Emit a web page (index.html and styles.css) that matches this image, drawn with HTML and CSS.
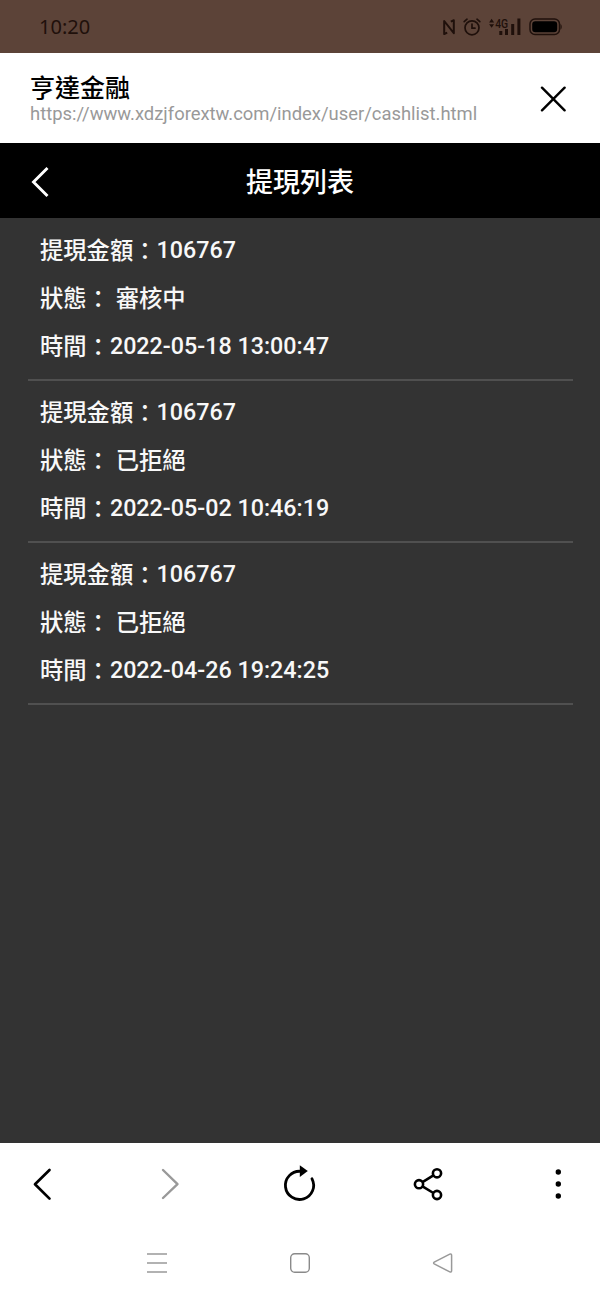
FILE: index.html
```html
<!DOCTYPE html>
<html lang="zh-Hant">
<head>
  <meta charset="UTF-8">
  <title>提現列表</title>
  <link rel="stylesheet" href="styles.css">
</head>
<body>
  <div class="status-bar">
    <span class="clock">10:20</span>
    <div class="status-icons">
      <svg width="12" height="18" viewBox="0 0 12 18" fill="none" stroke="currentColor" stroke-width="2" stroke-linejoin="round">
        <path d="M4.2 14.6 1.2 16V3L10.8 15.2V2.2L7.8 3.6"/>
      </svg>
      <svg width="18" height="18" viewBox="0 0 18 18" fill="none" stroke="currentColor" stroke-width="1.7" stroke-linecap="round">
        <circle cx="9" cy="9.8" r="7"/>
        <path d="M9 6v4.2h3M1.2 3.6 4 1.2M16.8 3.6 14 1.2"/>
      </svg>
      <svg class="signal" width="32" height="18" viewBox="0 0 32 18" fill="currentColor">
        <path d="M0.1 4.4 2.6 0.8 5.1 4.4ZM0.1 6.2 2.6 9.8 5.1 6.2Z"/>
        <text class="network" x="6.2" y="9.8" textLength="13" lengthAdjust="spacingAndGlyphs">4G</text>
        <rect x="10.3" y="13" width="3" height="4"/>
        <rect x="16" y="11" width="3" height="6"/>
        <rect x="22.2" y="6" width="3" height="11"/>
        <rect x="28.4" y="0.5" width="3" height="16.5"/>
      </svg>
      <svg width="34" height="18" viewBox="0 0 34 18">
        <rect x="1" y="1" width="29.5" height="15.5" rx="5" fill="none" stroke="currentColor" stroke-width="1.5"/>
        <rect x="3.2" y="3.2" width="25" height="11" rx="3.2" fill="#000"/>
        <path d="M31.5 6c1.6.6 1.6 5 0 5.6z" fill="currentColor"/>
      </svg>
    </div>
  </div>

  <div class="browser-header">
    <div class="site">
      <div class="site-name">亨達金融</div>
      <div class="site-url">https://www.xdzjforextw.com/index/user/cashlist.html</div>
    </div>
    <svg class="close" width="26" height="26" viewBox="0 0 26 26" fill="none" stroke="currentColor" stroke-width="2.4" stroke-linecap="round">
      <path d="M2 1.7 24.6 24.3M24.6 1.7 2 24.3"/>
    </svg>
  </div>

  <div class="page-header">
    <svg class="page-back" width="20" height="32" viewBox="0 0 20 32" fill="none" stroke="currentColor" stroke-width="2.9">
      <path d="M17.5 2 3.5 16 17.5 30"/>
    </svg>
    <h1 class="page-title">提現列表</h1>
  </div>

  <div class="cash-list">
    <div class="cash-item">
      <p>提現金額<span class="colon">：</span><span class="value">106767</span></p>
      <p>狀態<span class="colon">：</span> 審核中</p>
      <p>時間<span class="colon">：</span><span class="value">2022-05-18 13:00:47</span></p>
    </div>
    <div class="cash-item">
      <p>提現金額<span class="colon">：</span><span class="value">106767</span></p>
      <p>狀態<span class="colon">：</span> 已拒絕</p>
      <p>時間<span class="colon">：</span><span class="value">2022-05-02 10:46:19</span></p>
    </div>
    <div class="cash-item">
      <p>提現金額<span class="colon">：</span><span class="value">106767</span></p>
      <p>狀態<span class="colon">：</span> 已拒絕</p>
      <p>時間<span class="colon">：</span><span class="value">2022-04-26 19:24:25</span></p>
    </div>
  </div>

  <div class="toolbar">
    <svg width="34" height="38" viewBox="0 0 34 38" fill="none" stroke="#000" stroke-width="2.7" stroke-linecap="round" stroke-linejoin="round">
      <path d="M24.5 5 10 19.2 24.5 33.6"/>
    </svg>
    <svg width="34" height="38" viewBox="0 0 34 38" fill="none" stroke="#999" stroke-width="2.4" stroke-linecap="round" stroke-linejoin="round">
      <path d="M9 5 23.5 19.2 9 33"/>
    </svg>
    <svg width="34" height="38" viewBox="0 0 34 38" fill="none" stroke="#000" stroke-width="2.8" stroke-linecap="round">
      <path d="M17.5 6.3A14.1 14.1 0 1 0 29 13.8"/>
      <path d="M16.8 0.2V12L24.8 6Z" fill="#000" stroke="none"/>
    </svg>
    <svg width="34" height="38" viewBox="0 0 34 38" fill="none" stroke="#000" stroke-width="2.6">
      <circle cx="7" cy="19.2" r="4.1"/>
      <circle cx="25" cy="8.3" r="4.1"/>
      <circle cx="25" cy="30" r="4.1"/>
      <path d="M10.5 17.1 21.4 10.4M10.5 21.3 21.4 28"/>
    </svg>
    <svg width="34" height="38" viewBox="0 0 34 38" fill="#000">
      <circle cx="17.3" cy="7" r="2.7"/>
      <circle cx="17.3" cy="19" r="2.7"/>
      <circle cx="17.3" cy="31" r="2.7"/>
    </svg>
  </div>

  <div class="system-nav">
    <svg width="22" height="22" viewBox="0 0 22 22" fill="none" stroke="#999" stroke-width="1.6">
      <path d="M1 2h20M1 11h20M1 20h20"/>
    </svg>
    <svg width="22" height="22" viewBox="0 0 22 22" fill="none" stroke="#8a8a8a" stroke-width="1.4">
      <rect x="1.7" y="1.7" width="18.6" height="18.6" rx="4"/>
    </svg>
    <svg width="22" height="22" viewBox="0 0 22 22" fill="none" stroke="#999" stroke-width="1.5" stroke-linejoin="round">
      <path d="M2.2 10.2 17.8 2.1Q19.6 1.5 19.6 3.2V18.8Q19.6 20.5 17.8 19.9L2.2 11.8Q1 11 2.2 10.2Z"/>
    </svg>
  </div>
</body>
</html>
```

FILE: styles.css
```css
body {
  margin: 0;
  height: 1300px;
  display: flex;
  flex-direction: column;
  background-color: #333333;
  font-family: Roboto, "Noto Sans CJK TC", sans-serif;
}

svg {
  display: block;
  flex-shrink: 0;
}

.status-bar {
  height: 53px;
  box-sizing: border-box;
  padding: 0 37px 0 39px;
  display: flex;
  align-items: center;
  justify-content: space-between;
  background-color: #5c4338;
  color: #1f100b;
}

.clock {
  font-family: "Noto Sans", sans-serif;
  font-size: 20px;
}

.status-icons {
  display: flex;
  align-items: center;
  gap: 8px;
}

.network {
  font-size: 12px;
  font-weight: 500;
}

.browser-header {
  height: 90px;
  box-sizing: border-box;
  padding: 1px 34px 0 30px;
  display: flex;
  align-items: center;
  justify-content: space-between;
  background-color: #ffffff;
  color: #000000;
}

.site-name {
  font-size: 25px;
  font-weight: 500;
  line-height: 31px;
}

.site-url {
  font-size: 18.42px;
  line-height: 20px;
  color: #999999;
}

.page-header {
  height: 75px;
  box-sizing: border-box;
  padding-top: 2px;
  display: grid;
  grid-template-columns: 60px 1fr 60px;
  align-items: center;
  background-color: #000000;
  color: #ffffff;
}

.page-back {
  margin-left: 30px;
}

.page-title {
  margin: 0;
  padding-top: 2px;
  text-align: center;
  font-size: 27px;
  font-weight: 500;
  line-height: 40px;
}

.cash-list {
  flex: 1;
  padding: 1px 27px 0 28px;
}

.cash-item {
  padding: 8px 12px;
  border-bottom: 2px solid #505050;
}

.cash-item p {
  margin: 0;
  font-size: 23.3px;
  font-weight: 500;
  line-height: 48px;
  color: #f8f8f8;
}

.cash-item .colon {
  line-height: 1;
  vertical-align: -1px;
}

.cash-item .value {
  line-height: 1;
  vertical-align: 1px;
}

.toolbar {
  height: 82px;
  box-sizing: border-box;
  padding: 0 25px;
  display: flex;
  align-items: center;
  justify-content: space-between;
  background-color: #ffffff;
}

.system-nav {
  height: 75px;
  display: flex;
  align-items: center;
  justify-content: center;
  gap: 121px;
  background-color: #ffffff;
}
```
